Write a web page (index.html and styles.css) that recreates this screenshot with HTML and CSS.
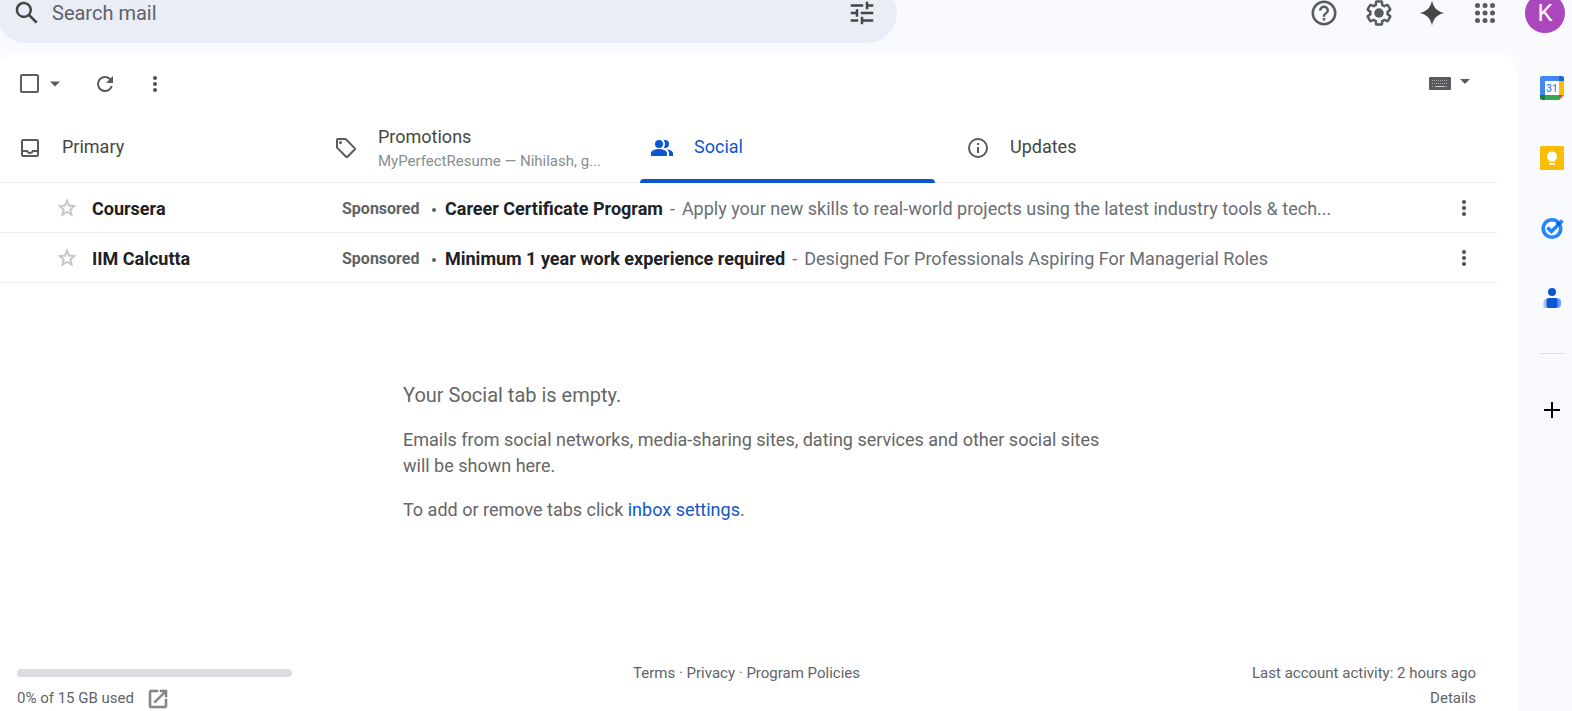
FILE: index.html
```html
<!DOCTYPE html>
<html lang="en">
<head>
<meta charset="utf-8">
<title>Social inbox</title>
<link rel="stylesheet" href="styles.css">
</head>
<body>
<header class="topbar">
  <form class="search" role="search">
    <button class="icon-btn" type="button" aria-label="Search"><svg class="i30" viewBox="0 0 24 24"><path d="M20.49 19l-5.73-5.73A6.5 6.5 0 1 0 13.27 14.76L19 20.49 20.49 19zM5 9.5C5 7.01 7.01 5 9.5 5S14 7.01 14 9.5 11.99 14 9.5 14 5 11.99 5 9.5z"/></svg></button>
    <input class="search-input" type="text" placeholder="Search mail" aria-label="Search mail">
    <button class="icon-btn" type="button" aria-label="Show search options"><svg class="i30" viewBox="0 0 24 24"><path d="M3 17v2h6v-2H3zM3 5v2h10V5H3zm10 16v-2h8v-2h-8v-2h-2v6h2zM7 9v2H3v2h4v2h2V9H7zm14 4v-2H11v2h10zm-6-4h2V7h4V5h-4V3h-2v6z"/></svg></button>
  </form>
  <nav class="tools" aria-label="Account tools">
    <button class="icon-btn help" type="button" aria-label="Support"><svg class="i30" viewBox="0 0 24 24"><path d="M11 18h2v-2h-2v2zm1-16a10 10 0 1 0 0 20 10 10 0 0 0 0-20zm0 18a8 8 0 1 1 0-16 8 8 0 0 1 0 16zm0-14a4 4 0 0 0-4 4h2a2 2 0 1 1 4 0c0 2-3 1.75-3 5h2c0-2.25 3-2.5 3-5a4 4 0 0 0-4-4z"/></svg></button>
    <button class="icon-btn" type="button" aria-label="Settings"><svg class="i30" viewBox="0 0 24 24"><path d="M13.85 22.25h-3.7c-.74 0-1.36-.54-1.45-1.27l-.27-1.89c-.27-.14-.53-.29-.79-.46l-1.8.72c-.7.26-1.47-.03-1.81-.65L2.2 15.53c-.35-.66-.2-1.44.36-1.88l1.53-1.19c-.01-.15-.02-.3-.02-.46 0-.15.01-.31.02-.46l-1.52-1.19c-.59-.45-.74-1.26-.37-1.88l1.85-3.19c.34-.62 1.11-.9 1.79-.63l1.81.73c.26-.17.52-.32.78-.46l.27-1.91c.09-.7.71-1.25 1.44-1.25h3.7c.74 0 1.36.54 1.45 1.27l.27 1.89c.27.14.53.29.79.46l1.8-.72c.71-.26 1.48.03 1.82.65l1.84 3.18c.36.66.2 1.44-.36 1.88l-1.52 1.19c.01.15.02.3.02.46s-.01.31-.02.46l1.52 1.19c.56.45.72 1.23.37 1.86l-1.86 3.22c-.34.62-1.11.9-1.8.63l-1.8-.72c-.26.17-.52.32-.78.46l-.27 1.91c-.1.68-.72 1.22-1.46 1.22zm-3.23-2h2.76l.37-2.55.53-.22c.44-.18.88-.44 1.34-.78l.45-.34 2.38.96 1.38-2.4-2.03-1.58.07-.56c.03-.26.06-.51.06-.78s-.03-.53-.06-.78l-.07-.56 2.03-1.58-1.39-2.4-2.39.96-.45-.35c-.42-.32-.87-.58-1.33-.77l-.52-.22-.37-2.55h-2.76l-.37 2.55-.53.21c-.44.19-.88.44-1.34.79l-.45.33-2.38-.95-1.39 2.39 2.03 1.58-.07.56a7 7 0 0 0-.06.79c0 .26.02.53.06.78l.07.56-2.03 1.58 1.38 2.4 2.39-.96.45.35c.43.33.86.58 1.33.77l.53.22.38 2.55z"/><circle cx="12" cy="12" r="3.8"/></svg></button>
    <button class="icon-btn" type="button" aria-label="Ask Gemini"><svg class="i30 dark" viewBox="0 0 24 24"><path d="M12 2C13 7.600 16.400 11 22 12 16.400 13 13 16.400 12 22 11 16.400 7.600 13 2 12 7.600 11 11 7.600 12 2z"/></svg></button>
    <button class="icon-btn" type="button" aria-label="Google apps"><svg class="i30" viewBox="0 0 24 24"><g><circle cx="6" cy="6" r="2"/><circle cx="12" cy="6" r="2"/><circle cx="18" cy="6" r="2"/><circle cx="6" cy="12" r="2"/><circle cx="12" cy="12" r="2"/><circle cx="18" cy="12" r="2"/><circle cx="6" cy="18" r="2"/><circle cx="12" cy="18" r="2"/><circle cx="18" cy="18" r="2"/></g></svg></button>
    <button class="avatar" type="button" aria-label="Account">K</button>
  </nav>
</header>
<div class="body">
  <main class="panel">
    <div class="toolbar">
      <input class="check" type="checkbox" aria-label="Select all">
      <button class="icon-btn caret" type="button" aria-label="Select options"><svg class="i20" viewBox="0 0 20 20"><path d="M5 7.500h10l-5 5z"/></svg></button>
      <button class="icon-btn refresh" type="button" aria-label="Refresh"><svg class="i24" viewBox="0 0 24 24"><path d="M17.650 6.350A7.960 7.960 0 0 0 12 4a8 8 0 1 0 7.730 10h-2.080A6 6 0 1 1 12 6c1.660 0 3.140.69 4.220 1.780L13 11h7V4l-2.350 2.350z"/></svg></button>
      <button class="icon-btn more" type="button" aria-label="More"><svg class="i24" viewBox="0 0 24 24"><circle cx="12" cy="6" r="2"/><circle cx="12" cy="12" r="2"/><circle cx="12" cy="18" r="2"/></svg></button>
      <button class="icon-btn keyboard" type="button" aria-label="Select input tool"><svg class="kbd" viewBox="0 0 22 13"><path d="M1 0h20a1 1 0 0 1 1 1v11a1 1 0 0 1-1 1H1a1 1 0 0 1-1-1V1a1 1 0 0 1 1-1z"/><path class="keys" d="M3 3.500h16M3 6.500h16M3 9.500h2M17 9.500h2"/><path class="space" d="M6 9.500h10"/></svg><svg class="i20" viewBox="0 0 20 20"><path d="M5 5h10l-5 5z"/></svg></button>
    </div>
    <div class="tabs" role="tablist">
      <button class="tab" type="button" role="tab"><svg class="i24" viewBox="0 0 24 24"><path d="M19 3H5a2 2 0 0 0-2 2v14c0 1.100.9 2 2 2h14a2 2 0 0 0 2-2V5a2 2 0 0 0-2-2zm0 16H5v-3h3.560c.69 1.190 1.970 2 3.450 2s2.750-.81 3.450-2H19v3zm0-5h-4.990c0 1.100-.9 2-2 2s-2-.9-2-2H5V5h14v9z"/></svg><span class="tab-text">Primary</span></button>
      <button class="tab" type="button" role="tab"><svg class="i24" viewBox="0 0 24 24"><path d="M21.410 11.410l-8.830-8.830A2 2 0 0 0 11.170 2H4a2 2 0 0 0-2 2v7.170c0 .53.21 1.040.59 1.410l8.830 8.830c.78.78 2.050.78 2.830 0l7.170-7.170c.78-.78.78-2.040-.01-2.830zM12.830 20L4 11.170V4h7.170L20 12.830 12.830 20z"/><circle cx="6.500" cy="6.500" r="1.500"/></svg><span class="tab-text two-line">Promotions<small class="tab-sub">MyPerfectResume — Nihilash, g...</small></span></button>
      <button class="tab active" type="button" role="tab" aria-selected="true"><svg class="i24" viewBox="0 0 24 24"><path d="M15 12a4 4 0 0 0 0-8c-.470 0-.910.100-1.330.240A5.980 5.980 0 0 1 15 8c0 1.430-.5 2.740-1.330 3.760.42.140.86.240 1.330.240z"/><circle cx="9" cy="8" r="4"/><path d="M9 13c-2.670 0-8 1.340-8 4v3h16v-3c0-2.660-5.330-4-8-4zM16.670 13.130C18.040 14.060 19 15.320 19 17v3h4v-3c0-2.180-3.570-3.470-6.330-3.870z"/></svg><span class="tab-text">Social</span></button>
      <button class="tab" type="button" role="tab"><svg class="i24" viewBox="0 0 24 24"><path d="M11 7h2v2h-2zm0 4h2v6h-2zm1-9a10 10 0 1 0 0 20 10 10 0 0 0 0-20zm0 18a8 8 0 1 1 0-16 8 8 0 0 1 0 16z"/></svg><span class="tab-text">Updates</span></button>
    </div>
    <ul class="list">
      <li class="row">
        <button class="icon-btn star" type="button" aria-label="Star"><svg class="i24" viewBox="0 0 24 24"><path d="M22 9.240l-7.190-.62L12 2 9.190 8.630 2 9.240l5.460 4.730L5.820 21 12 17.270 18.180 21l-1.630-7.030L22 9.240zM12 15.400l-3.760 2.270 1-4.280-3.320-2.880 4.380-.38L12 6.100l1.710 4.040 4.380.38-3.320 2.880 1 4.280L12 15.400z"/></svg></button>
        <span class="sender">Coursera</span><span class="ad">Sponsored</span><span class="dot"></span>
        <span class="line"><b class="subject">Career Certificate Program</b><span class="dash">-</span>Apply your new skills to real-world projects using the latest industry tools &amp; tech...</span>
        <button class="icon-btn" type="button" aria-label="More options"><svg class="i24" viewBox="0 0 24 24"><circle cx="12" cy="6" r="2"/><circle cx="12" cy="12" r="2"/><circle cx="12" cy="18" r="2"/></svg></button>
      </li>
      <li class="row">
        <button class="icon-btn star" type="button" aria-label="Star"><svg class="i24" viewBox="0 0 24 24"><path d="M22 9.240l-7.190-.62L12 2 9.190 8.630 2 9.240l5.460 4.730L5.820 21 12 17.270 18.180 21l-1.630-7.030L22 9.240zM12 15.400l-3.760 2.270 1-4.280-3.320-2.880 4.380-.38L12 6.100l1.710 4.040 4.380.38-3.320 2.880 1 4.280L12 15.400z"/></svg></button>
        <span class="sender">IIM Calcutta</span><span class="ad">Sponsored</span><span class="dot"></span>
        <span class="line"><b class="subject">Minimum 1 year work experience required</b><span class="dash">-</span>Designed For Professionals Aspiring For Managerial Roles</span>
        <button class="icon-btn" type="button" aria-label="More options"><svg class="i24" viewBox="0 0 24 24"><circle cx="12" cy="6" r="2"/><circle cx="12" cy="12" r="2"/><circle cx="12" cy="18" r="2"/></svg></button>
      </li>
    </ul>
    <section class="empty">
      <h2 class="empty-title">Your Social tab is empty.</h2>
      <p class="empty-text">Emails from social networks, media-sharing sites, dating services and other social sites will be shown here.</p>
      <p class="empty-text">To add or remove tabs click <a class="link" href="#">inbox settings</a>.</p>
    </section>
    <footer class="footer">
      <div>
        <div class="meter"></div>
        <div class="quota"><span>0% of 15 GB used</span><a class="manage" href="#" aria-label="Manage storage"><svg class="i24" viewBox="0 0 24 24"><path d="M19 19H5V5h7V3H5a2 2 0 0 0-2 2v14a2 2 0 0 0 2 2h14c1.100 0 2-.9 2-2v-7h-2v7zM14 3v2h3.590l-9.830 9.830 1.410 1.410L19 6.410V10h2V3h-7z"/></svg></a></div>
      </div>
      <div class="policies"><a href="#">Terms</a> · <a href="#">Privacy</a> · <a href="#">Program Policies</a></div>
      <div class="activity">Last account activity: 2 hours ago<br><a href="#">Details</a></div>
    </footer>
  </main>
  <aside class="side" aria-label="Side panel">
    <button class="icon-btn" type="button" aria-label="Calendar"><svg class="i24" viewBox="0 0 24 24"><path fill="#4285f4" d="M2 0h17v5H5v14H0V2a2 2 0 0 1 2-2z"/><path fill="#1967d2" d="M19 0h3a2 2 0 0 1 2 2v3h-5z"/><path fill="#fbbc04" d="M19 5h5v14h-5z"/><path fill="#34a853" d="M5 19h14v5H5z"/><path fill="#188038" d="M0 19h5v5H2a2 2 0 0 1-2-2z"/><path fill="#ea4335" d="M19 19h5l-5 5z"/><path fill="#fff" d="M5 5h14v14H5z"/><text class="cal-day" x="12" y="16" text-anchor="middle">31</text></svg></button>
    <button class="icon-btn" type="button" aria-label="Keep"><svg class="i24" viewBox="0 0 24 24"><rect width="24" height="24" rx="1.500" fill="#fbbc04"/><path fill="#fff" d="M12 5.500a5 5 0 0 0-2.700 9.200V15.700h5.400v-1A5 5 0 0 0 12 5.500zM9.300 17h5.400v2H9.300z"/></svg></button>
    <button class="icon-btn" type="button" aria-label="Tasks"><svg class="i24" viewBox="0 0 24 24"><circle cx="12" cy="12.500" r="8.800" fill="none" stroke="#2684fc" stroke-width="3.600"/><path fill="none" stroke="#2684fc" stroke-width="3.600" d="M7.500 11.500l4 4L22.500 4.500"/><path fill="#0066da" d="M16 7.500l2.600-2.600 2.600 3-2.600 2.600z"/></svg></button>
    <button class="icon-btn" type="button" aria-label="Contacts"><svg class="i24" viewBox="0 0 24 24"><circle cx="12" cy="6" r="4" fill="#0b57d0"/><path fill="#a8c1fb" d="M8 12h2v10H3.500v-5a5 5 0 0 1 4.500-5z"/><path fill="#6a9afc" d="M15 12h2a4 4 0 0 1 4 4v2a4 4 0 0 1-4 4h-2z"/><rect x="6.500" y="12" width="11" height="10" rx="2.500" fill="#0b57d0"/></svg></button>
    <hr class="divider">
    <button class="icon-btn" type="button" aria-label="Get add-ons"><svg class="i24" viewBox="0 0 24 24"><path fill="#000" d="M11 4h2v7h7v2h-7v7h-2v-7H4v-2h7z"/></svg></button>
  </aside>
</div>
</body>
</html>
```
FILE: styles.css
```css
* { box-sizing: border-box; }
body {
  margin: 0;
  height: 100vh;
  overflow: hidden;
  display: flex;
  flex-direction: column;
  background: #f8fafe;
  color: #444746;
  font-family: Roboto, "Liberation Sans", sans-serif;
  font-size: 18px;
}
button, input { font: inherit; color: inherit; }
svg { display: block; fill: #575b5f; flex: none; }
.i30 { width: 30px; height: 30px; }
.i24 { width: 24px; height: 24px; }
.i20 { width: 20px; height: 20px; }
.dark { fill: #444746; }
.icon-btn { display: flex; align-items: center; padding: 0; border: 0; background: none; }

.topbar {
  display: flex;
  justify-content: space-between;
  flex: none;
  height: 60px;
  margin: -17px 0 10px -4px;
}
.search {
  display: flex;
  align-items: center;
  flex: 0 1 901px;
  padding: 0 20px 0 16px;
  border-radius: 30px;
  background: #e9edf6;
}
.search svg { fill: #444746; }
.search-input {
  flex: 1;
  min-width: 0;
  margin-left: 10px;
  padding: 0;
  border: 0;
  outline: 0;
  background: none;
  font-size: 20px;
}
.search-input::placeholder { color: #5f6368; opacity: 1; }
.tools { display: flex; align-items: center; gap: 23px; padding-right: 7px; }
.help { margin-right: 2px; }
.avatar {
  width: 40px;
  height: 40px;
  margin-left: 2px;
  padding: 0;
  border: 0;
  border-radius: 50%;
  background: #ab47bc;
  color: #fff;
  font-size: 24px;
}

.body { display: flex; flex: 1; min-height: 0; margin-left: -4px; }
.panel {
  flex: 1;
  min-width: 0;
  display: flex;
  flex-direction: column;
  padding-right: 20px;
  border-radius: 20px 20px 0 0;
  background: #fff;
}

.toolbar { display: flex; align-items: center; height: 60px; padding: 1px 22px 0 24px; }
.check {
  appearance: none;
  width: 19px;
  height: 19px;
  margin: 0;
  border: 2px solid #5b5f62;
  border-radius: 2px;
}
.caret { margin-left: 6px; }
.refresh { margin-left: 28px; }
.more { margin-left: 26px; }
.more svg, .row svg { fill: #4c5053; }
.keyboard { margin-left: auto; gap: 4px; }
.kbd { width: 22px; height: 13px; }
.kbd .keys { stroke: #aaa; stroke-dasharray: 1 1; fill: none; }
.kbd .space { stroke: #ccc; fill: none; }

.tabs { display: flex; height: 70px; padding-left: 12px; border-bottom: 1px solid #e8eded; }
.tab {
  display: flex;
  align-items: center;
  gap: 20px;
  position: relative;
  flex: 0 1 316px;
  padding: 0 0 0 10px;
  border: 0;
  background: none;
  text-align: left;
}
.tab-text { line-height: 25px; padding-bottom: 2px; }
.two-line { padding: 2px 0 0; }
.tab-sub { display: block; color: #8a8d8f; font-size: 15px; white-space: nowrap; }
.active { color: #0b57d0; }
.active svg { fill: #0b57d0; }
.active::after {
  content: "";
  position: absolute;
  left: 0;
  right: 21px;
  bottom: -1px;
  height: 4px;
  border-radius: 4px 4px 0 0;
  background: #0b57d0;
}

.list { margin: 0; padding: 0; list-style: none; }
.row {
  display: flex;
  align-items: center;
  height: 50px;
  padding: 1px 21px 0 59px;
  border-bottom: 1px solid #e8eded;
}
.row .star svg { fill: #c2c4c6; stroke: #c2c4c6; stroke-width: .5; padding: 1px; }
.sender { flex: 0 0 250px; margin-left: 13px; color: #202124; font-weight: 700; }
.ad { flex: 0 0 90px; color: #5f6368; font-size: 16px; font-weight: 700; }
.dot { flex: none; width: 4px; height: 4px; margin: 3px 9px 0 0; border-radius: 50%; background: #5f6368; }
.line { flex: 1; min-width: 0; overflow: hidden; color: #6a6e73; white-space: nowrap; text-overflow: ellipsis; }
.subject { color: #202124; font-weight: 700; }
.dash { margin: 0 7px; }

.empty { width: 700px; max-width: 100%; margin: 98px auto 0 407px; color: #666; }
.empty-title { margin: 0 0 18px; font-size: 20px; font-weight: 400; line-height: 28px; }
.empty-text { margin: 0 0 18px; line-height: 26px; }
.link { color: #1155cc; text-decoration: none; }

.footer {
  display: grid;
  grid-template-columns: 1fr 1fr 1fr;
  margin-top: auto;
  padding: 0 21px 0 21px;
  color: #5f6368;
  font-size: 15px;
  line-height: 25px;
}
.footer a { color: inherit; text-decoration: none; }
.meter { width: 275px; height: 8px; margin: 8px 0 9px; border-radius: 4px; background: #dadce0; }
.quota { display: flex; align-items: center; gap: 12px; }
.quota svg { fill: #80868b; stroke: #80868b; stroke-width: .6; }
.policies { text-align: center; }
.activity { text-align: right; }

.side { flex: 0 0 55px; display: flex; flex-direction: column; align-items: center; gap: 46px; padding: 23px 0 0 15px; }
.cal-day { fill: #4285f4; font-size: 10px; font-weight: 500; }
.divider { width: 25px; margin: -3px 0 -2px; border: 0; border-top: 1px solid #dadce0; }
```
